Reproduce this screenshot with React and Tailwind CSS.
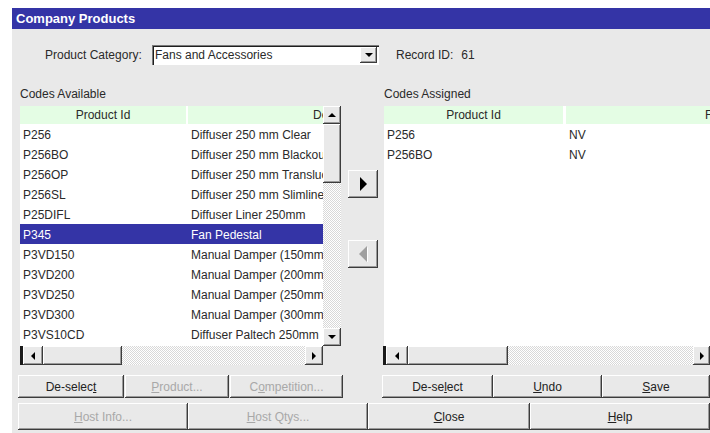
import React from "react";

const available = [
  ["P256", "Diffuser 250 mm Clear"],
  ["P256BO", "Diffuser 250 mm Blackout"],
  ["P256OP", "Diffuser 250 mm Translucent"],
  ["P256SL", "Diffuser 250 mm Slimline"],
  ["P25DIFL", "Diffuser Liner 250mm"],
  ["P345", "Fan Pedestal"],
  ["P3VD150", "Manual Damper (150mm)"],
  ["P3VD200", "Manual Damper (200mm)"],
  ["P3VD250", "Manual Damper (250mm)"],
  ["P3VD300", "Manual Damper (300mm)"],
  ["P3VS10CD", "Diffuser Paltech 250mm"],
];

const assigned = [
  ["P256", "NV"],
  ["P256BO", "NV"],
];

const raised =
  "bg-[#e9e9e9] shadow-[inset_-1px_-1px_#3c3c3c,inset_1px_1px_#ffffff,inset_-2px_-2px_#9a9a9a]";
const track =
  "bg-[repeating-conic-gradient(#ffffff_0%_25%,#d8d8d8_0%_50%)] bg-[length:2px_2px]";

function Tri({ dir, color = "#000", size = 4 }) {
  const s = size;
  const pts = {
    up: `0,${s} ${s},0 ${2 * s},${s}`,
    down: `0,0 ${2 * s},0 ${s},${s}`,
    left: `${s},0 ${s},${2 * s} 0,${s}`,
    right: `0,0 0,${2 * s} ${s},${s}`,
  }[dir];
  const w = dir === "up" || dir === "down" ? 2 * s : s;
  const h = dir === "up" || dir === "down" ? s : 2 * s;
  return (
    <svg width={w} height={h} viewBox={`0 0 ${w} ${h}`}>
      <polygon points={pts} fill={color} />
    </svg>
  );
}

function Btn({ children, w, h, disabled }) {
  return (
    <div
      className={`${raised} ${w} ${h} flex items-center justify-center shrink-0 ${
        disabled ? "text-[#a8a8a8]" : "text-[#222]"
      }`}
    >
      <span>{children}</span>
    </div>
  );
}

function HScroll({ leftW, thumbW, rightW, width }) {
  return (
    <div className={`flex h-[19px] ${width} overflow-hidden shrink-0`}>
      <div className="w-[3px] bg-[#1a1a1a] shrink-0" />
      <div className={`${raised} ${leftW} flex items-center justify-center shrink-0`}>
        <Tri dir="left" size={4} />
      </div>
      <div className={`${raised} ${thumbW} shrink-0`} />
      <div className={`${track} flex-1`} />
      <div className={`${raised} ${rightW} flex items-center justify-center shrink-0`}>
        <Tri dir="right" size={4} />
      </div>
    </div>
  );
}

export default function App() {
  return (
    <div className="w-[710px] h-[433px] bg-white pt-[8px] pl-[12px] overflow-hidden font-['Liberation_Sans',Arial,sans-serif] text-[12px] leading-[14px] text-[#2a2a2a]">
      {/* window caption */}
      <div className="h-[21px] bg-[#3434a6] flex items-center pl-[4px] text-white font-bold text-[13px]">
        Company Products
      </div>

      <div className="h-[404px] bg-[#e9e9e9] flex flex-col">
        {/* category selector */}
        <div className="mt-[16px] h-[20px] flex items-center pl-[33px]">
          <div className="w-[107px]">Product Category:</div>
          <div className="w-[227px] h-[20px] bg-white flex items-center shadow-[inset_1px_1px_#7a7a7a,inset_2px_2px_#1e1e1e,inset_-1px_-1px_#ffffff] pl-[3px] pr-[2px]">
            <span className="flex-1">Fans and Accessories</span>
            <div className={`${raised} w-[17px] h-[16px] flex items-center justify-center`}>
              <Tri dir="down" size={4} />
            </div>
          </div>
          <div className="ml-[17px]">Record ID:</div>
          <div className="ml-[8px]">61</div>
        </div>

        {/* section labels */}
        <div className="mt-[22px] h-[15px] flex">
          <div className="pl-[8px] w-[372px]">Codes Available</div>
          <div>Codes Assigned</div>
        </div>

        {/* grids */}
        <div className="mt-[4px] flex pl-[8px]">
          {/* left grid */}
          <div className="flex flex-col w-[321px] shrink-0">
            <div className="flex h-[240px]">
              <div className="w-[303px] bg-white overflow-hidden">
                <div className="flex h-[18px] w-[480px]">
                  <div className="w-[166px] bg-[#e4fde4] flex items-center justify-center">
                    Product Id
                  </div>
                  <div className="w-[2px]" />
                  <div className="w-[310px] bg-[#e4fde4] flex items-center justify-center">
                    Description
                  </div>
                </div>
                {available.map(([id, desc]) => {
                  const sel = id === "P345";
                  return (
                    <div
                      key={id}
                      className={`flex h-[20px] items-center pt-[1px] w-[480px] ${
                        sel ? "bg-[#3434a6] text-white" : ""
                      }`}
                    >
                      <div className="w-[168px] pl-[3px]">{id}</div>
                      <div className="pl-[3px] whitespace-nowrap">{desc}</div>
                    </div>
                  );
                })}
              </div>
              {/* vertical scrollbar */}
              <div className="w-[18px] flex flex-col">
                <div className={`${raised} h-[18px] flex items-center justify-center`}>
                  <Tri dir="up" size={4} />
                </div>
                <div className={`${raised} h-[59px]`} />
                <div className={`${track} flex-1`} />
                <div className={`${raised} h-[18px] flex items-center justify-center`}>
                  <Tri dir="down" size={4} />
                </div>
              </div>
            </div>
            <HScroll leftW="w-[20px]" thumbW="w-[79px]" rightW="w-[18px]" width="w-[303px]" />
          </div>

          {/* move buttons */}
          <div className="w-[43px] shrink-0 flex flex-col pl-[7px]">
            <div className={`${raised} mt-[64px] w-[30px] h-[28px] flex items-center justify-center`}>
              <Tri dir="right" size={7} />
            </div>
            <div className={`${raised} mt-[42px] w-[30px] h-[28px] flex items-center justify-center`}>
              <svg width="9" height="16" viewBox="0 0 9 16">
                <polygon points="8,0 8,16 0,8" fill="#ffffff" transform="translate(1,1)" />
                <polygon points="8,0 8,16 0,8" fill="#a0a0a0" />
              </svg>
            </div>
          </div>

          {/* right grid */}
          <div className="flex flex-col w-[326px] shrink-0">
            <div className="h-[240px] bg-white overflow-hidden">
              <div className="flex h-[18px] w-[520px]">
                <div className="w-[179px] bg-[#e4fde4] flex items-center justify-center">
                  Product Id
                </div>
                <div className="w-[3px]" />
                <div className="w-[316px] bg-[#e4fde4] flex items-center justify-center">
                  Format
                </div>
              </div>
              {assigned.map(([id, v]) => (
                <div key={id} className="flex h-[20px] items-center pt-[1px]">
                  <div className="w-[182px] pl-[3px]">{id}</div>
                  <div className="pl-[3px]">{v}</div>
                </div>
              ))}
            </div>
            <HScroll leftW="w-[22px]" thumbW="w-[100px]" rightW="w-[17px]" width="w-[327px] -ml-[1px]" />
          </div>
        </div>

        {/* button row 1 */}
        <div className="mt-[10px] flex h-[23px]">
          <div className="flex gap-[1px] pl-[6px]">
            <Btn w="w-[106px]" h="h-[23px]">
              De-selec<u>t</u>
            </Btn>
            <Btn w="w-[104px]" h="h-[23px]" disabled>
              <u>P</u>roduct...
            </Btn>
            <Btn w="w-[113px]" h="h-[23px]" disabled>
              C<u>o</u>mpetition...
            </Btn>
          </div>
          <div className="flex ml-[39px]">
            <Btn w="w-[111px]" h="h-[23px]">
              De-se<u>l</u>ect
            </Btn>
            <Btn w="w-[109px]" h="h-[23px]">
              <u>U</u>ndo
            </Btn>
            <Btn w="w-[108px]" h="h-[23px]">
              <u>S</u>ave
            </Btn>
          </div>
        </div>

        {/* button row 2 */}
        <div className="mt-[5px] flex h-[27px] pl-[6px]">
          <Btn w="w-[170px]" h="h-[27px]" disabled>
            <u>H</u>ost Info...
          </Btn>
          <Btn w="w-[180px]" h="h-[27px]" disabled>
            <u>H</u>ost Qtys...
          </Btn>
          <Btn w="w-[162px]" h="h-[27px]">
            <u>C</u>lose
          </Btn>
          <Btn w="w-[180px]" h="h-[27px]">
            <u>H</u>elp
          </Btn>
        </div>
      </div>
    </div>
  );
}
